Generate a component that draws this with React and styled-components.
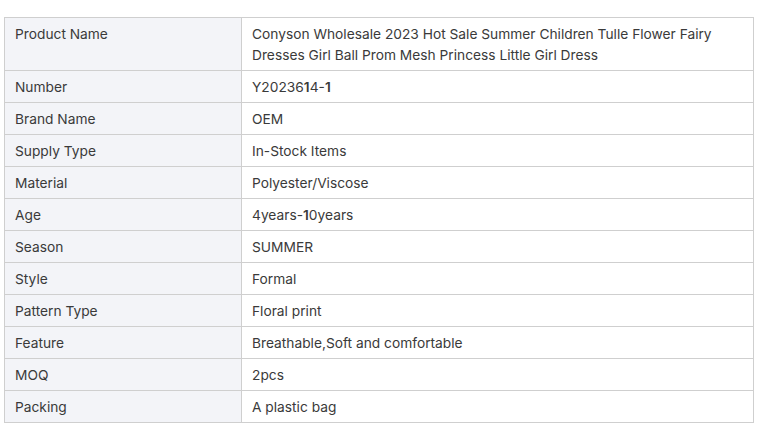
import React from "react";
import styled, { createGlobalStyle } from "styled-components";

const Global = createGlobalStyle`
  html, body { margin: 0; padding: 0; background: #fff; }
  body { font-family: Inter, "Noto Sans", Arial, sans-serif; }
`;

const Wrap = styled.div`
  padding: 17px 0 0 4px;
`;

const Table = styled.div`
  display: grid;
  grid-template-columns: 237px 512px;
  width: 750px;
  box-sizing: border-box;
  border-top: 1px solid #cfcfcf;
  border-left: 1px solid #cfcfcf;
`;

const Cell = styled.div`
  box-sizing: border-box;
  padding: 6px 10px 4px 10px;
  font-size: 13.75px;
  line-height: 21px;
  color: #3a3a3a;
  border-right: 1px solid #cfcfcf;
  border-bottom: 1px solid #cfcfcf;
  background: ${(p) => (p.$label ? "#f3f4f8" : "#fff")};
`;

const One = styled.span`
  font-weight: 600;
`;

const rows = [
  ["Product Name", "Conyson Wholesale 2023 Hot Sale Summer Children Tulle Flower Fairy Dresses Girl Ball Prom Mesh Princess Little Girl Dress"],
  ["Number", "Y2023614-1"],
  ["Brand Name", "OEM"],
  ["Supply Type", "In-Stock Items"],
  ["Material", "Polyester/Viscose"],
  ["Age", "4years-10years"],
  ["Season", "SUMMER"],
  ["Style", "Formal"],
  ["Pattern Type", "Floral print"],
  ["Feature", "Breathable,Soft and comfortable"],
  ["MOQ", "2pcs"],
  ["Packing", "A plastic bag"],
];

function renderValue(v) {
  if (v.startsWith("Y") || v.startsWith("4years")) {
    return v.split("").map((c, i) => (c === "1" ? <One key={i}>1</One> : c));
  }
  return v;
}

export default function App() {
  return (
    <>
      <Global />
      <Wrap>
        <Table>
          {rows.map(([k, v]) => (
            <React.Fragment key={k}>
              <Cell $label>{k}</Cell>
              <Cell>{renderValue(v)}</Cell>
            </React.Fragment>
          ))}
        </Table>
      </Wrap>
    </>
  );
}
